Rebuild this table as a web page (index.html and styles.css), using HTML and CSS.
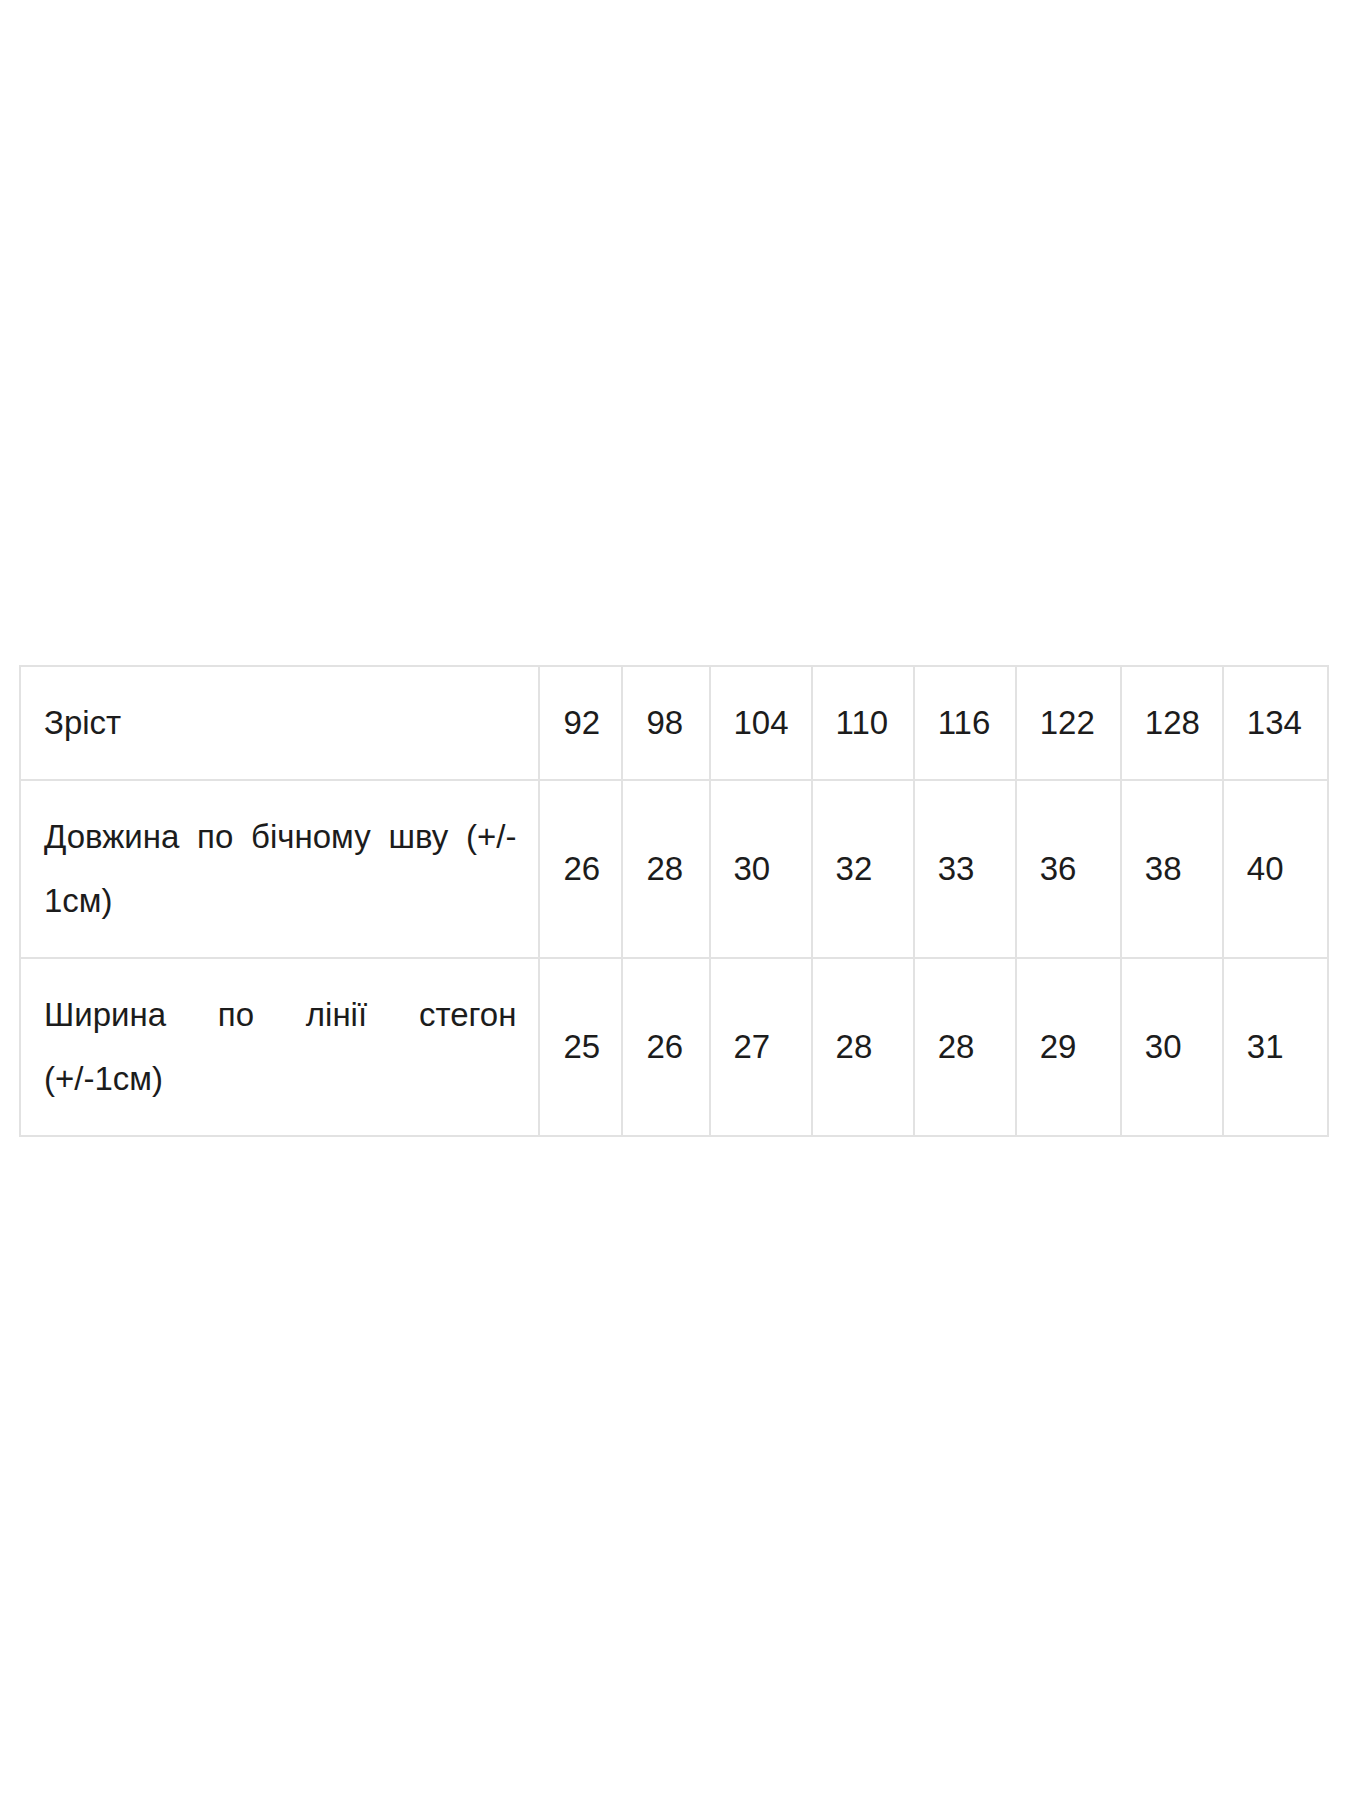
FILE: index.html
```html
<!DOCTYPE html>
<html lang="uk">
<head>
<meta charset="utf-8">
<title>Розмірна сітка</title>
<link rel="stylesheet" href="styles.css">
</head>
<body>
<main class="page">
  <table class="sizes">
    <colgroup>
      <col class="c-label">
      <col class="c-n1">
      <col class="c-n2">
      <col class="c-n3">
      <col class="c-n3">
      <col class="c-n3">
      <col class="c-n4">
      <col class="c-n3">
      <col class="c-n4">
    </colgroup>
    <tbody>
      <tr>
        <td class="label">Зріст</td>
        <td>92</td><td>98</td><td>104</td><td>110</td><td>116</td><td>122</td><td>128</td><td>134</td>
      </tr>
      <tr>
        <td class="label">Довжина по бічному шву (+/-<wbr>1см)</td>
        <td>26</td><td>28</td><td>30</td><td>32</td><td>33</td><td>36</td><td>38</td><td>40</td>
      </tr>
      <tr>
        <td class="label">Ширина по лінії стегон (+/-1см)</td>
        <td>25</td><td>26</td><td>27</td><td>28</td><td>28</td><td>29</td><td>30</td><td>31</td>
      </tr>
    </tbody>
  </table>
</main>
</body>
</html>
```

FILE: styles.css
```css
html, body {
  margin: 0;
  padding: 0;
  background: #ffffff;
}

.page {
  padding: 665px 20px 0 19px;
}

.sizes {
  width: 1310px;
  table-layout: fixed;
  border-collapse: collapse;
  font-family: "Liberation Sans", Arial, sans-serif;
  font-size: 33px;
  line-height: 64px;
  color: #1c1c1c;
}

.c-label { width: 519px; }
.c-n1 { width: 83px; }
.c-n2 { width: 87px; }
.c-n3 { width: 102px; }
.c-n4 { width: 105px; }

.sizes td {
  border: 2px solid #e2e2e2;
  padding: 24px 8px 24px 23px;
  vertical-align: middle;
  text-align: left;
  white-space: nowrap;
}

.sizes td.label {
  white-space: normal;
  text-align: justify;
  padding-right: 22px;
}
```
